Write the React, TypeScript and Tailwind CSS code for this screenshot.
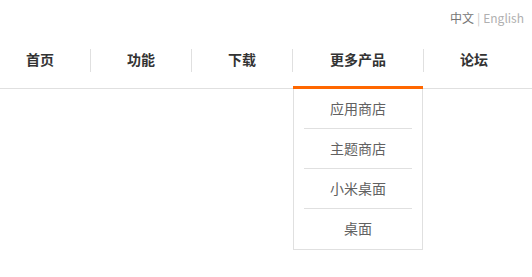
import React from "react";

const font = '"Noto Sans CJK SC", "Noto Sans", sans-serif';

export default function App() {
  const items = ["首页", "功能", "下载"];
  const drop = ["应用商店", "主题商店", "小米桌面", "桌面"];
  return (
    <div className="w-[532px] h-[277px] bg-white overflow-hidden" style={{ fontFamily: font }}>
      <div className="h-[36px] pt-[10px] pr-2 flex justify-end text-[12px] leading-[16px]">
        <span className="text-[#757575]">中文</span>
        <span className="text-[#c8c8c8] px-[3px]">|</span>
        <span className="text-[#b0b0b0]">English</span>
      </div>
      <div className="h-[53px] border-b border-[#e0e0e0] flex justify-end pr-2">
        {items.map((t) => (
          <React.Fragment key={t}>
            <div className="w-[100px] shrink-0 pt-[12px] text-center text-[14px] leading-[22px] font-bold text-[#333]">
              {t}
            </div>
            <div className="w-px shrink-0 h-[23px] mt-[13px] bg-[#e0e0e0]" />
          </React.Fragment>
        ))}
        <div className="relative w-[130px] shrink-0 pt-[12px] text-center text-[14px] leading-[22px] font-bold text-[#333]">
          更多产品
          <div className="absolute left-0 top-[50px] w-[130px] z-10 bg-white">
            <div className="h-[3px] bg-[#ff6700]" />
            <div className="border-x border-b border-[#e0e0e0]">
              {drop.map((d, i) => (
                <div key={d} className="h-[40px] px-[10px]">
                  <div
                    className={
                      "h-[40px] flex items-center justify-center pb-px text-[14px] font-normal text-[#616161] border-b " +
                      (i === drop.length - 1 ? "border-transparent" : "border-[#e0e0e0]")
                    }
                  >
                    {d}
                  </div>
                </div>
              ))}
            </div>
          </div>
        </div>
        <div className="w-px shrink-0 h-[23px] mt-[13px] bg-[#e0e0e0]" />
        <div className="w-[100px] shrink-0 pt-[12px] text-center text-[14px] leading-[22px] font-bold text-[#333]">
          论坛
        </div>
      </div>
    </div>
  );
}
